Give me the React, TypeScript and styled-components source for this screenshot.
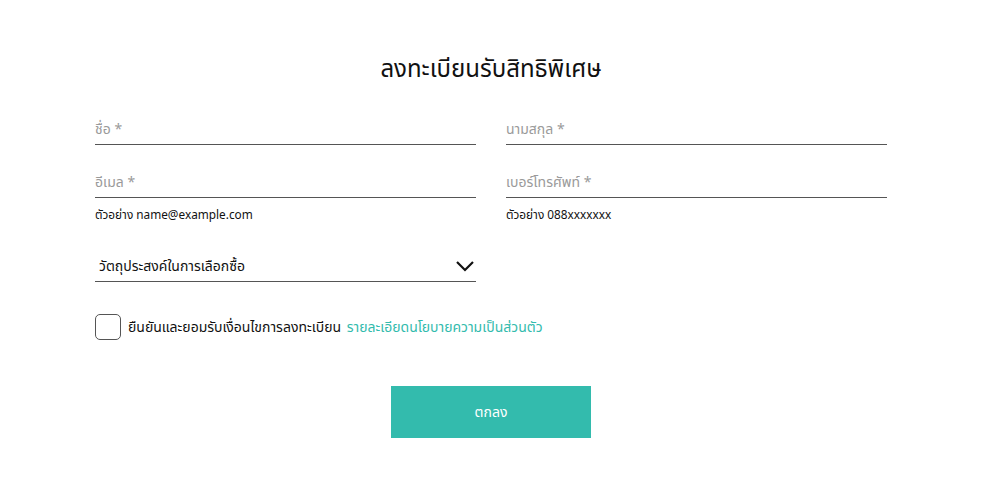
import styled, { createGlobalStyle } from "styled-components";

const GlobalStyle = createGlobalStyle`
    body {
        margin: 0;
        background: #fff;
        font-family: "Noto Sans", "Noto Sans Thai", "DejaVu Sans", sans-serif;
        color: #111;
    }
`;

function App() {
    return (
        <>
            <GlobalStyle />
            <Page>
                <Title>ลงทะเบียนรับสิทธิพิเศษ</Title>
                <FormGrid>
                    <Field>
                        <Input placeholder="ชื่อ *" />
                    </Field>
                    <Field>
                        <Input placeholder="นามสกุล *" />
                    </Field>
                    <Field>
                        <Input placeholder="อีเมล *" />
                        <Hint>ตัวอย่าง name@example.com</Hint>
                    </Field>
                    <Field>
                        <Input placeholder="เบอร์โทรศัพท์ *" />
                        <Hint>ตัวอย่าง 088xxxxxxx</Hint>
                    </Field>
                    <SelectBox>
                        <span>วัตถุประสงค์ในการเลือกซื้อ</span>
                        <svg width="20" height="12" viewBox="0 0 20 12">
                            <path
                                d="M2 2 L10 10 L18 2"
                                fill="none"
                                stroke="#111"
                                strokeWidth="2.2"
                            />
                        </svg>
                    </SelectBox>
                </FormGrid>
                <ConsentRow>
                    <CheckBox type="checkbox" />
                    <ConsentText>
                        ยืนยันและยอมรับเงื่อนไขการลงทะเบียน{" "}
                        <PolicyLink href="#">รายละเอียดนโยบายความเป็นส่วนตัว</PolicyLink>
                    </ConsentText>
                </ConsentRow>
                <SubmitButton>ตกลง</SubmitButton>
            </Page>
        </>
    );
}

export default App;

const Page = styled.div`
    width: 792px;
    margin: 0 auto;
    padding-top: 50px;
    display: flex;
    flex-direction: column;
    align-items: center;
`;

const Title = styled.h1`
    margin: 0;
    font-size: 24px;
    font-weight: 400;
    line-height: 36px;
`;

const FormGrid = styled.div`
    width: 100%;
    margin-top: 27px;
    display: grid;
    grid-template-columns: 1fr 1fr;
    column-gap: 30px;
    row-gap: 21px;
`;

const Field = styled.div`
    display: flex;
    flex-direction: column;
`;

const Input = styled.input`
    height: 31px;
    border: none;
    border-bottom: 1px solid #555;
    padding: 0;
    font-family: inherit;
    font-size: 14px;
    outline: none;
    &::placeholder {
        color: #9a9a9a;
    }
`;

const Hint = styled.div`
    margin-top: 7px;
    font-size: 11.8px;
    line-height: 18px;
`;

const SelectBox = styled.div`
    height: 30px;
    margin-top: 7px;
    padding: 0 1px 0 4px;
    border-bottom: 1px solid #555;
    display: flex;
    align-items: center;
    justify-content: space-between;
    font-size: 14px;
`;

const ConsentRow = styled.div`
    width: 100%;
    margin-top: 32px;
    display: flex;
    align-items: center;
    gap: 7px;
`;

const CheckBox = styled.input`
    appearance: none;
    margin: 0;
    width: 26px;
    height: 26px;
    border: 1px solid #555;
    border-radius: 5px;
    background: #fff;
`;

const ConsentText = styled.span`
    font-size: 14px;
`;

const PolicyLink = styled.a`
    color: #33bbad;
    text-decoration: none;
    margin-left: 2px;
`;

const SubmitButton = styled.button`
    margin-top: 46px;
    width: 200px;
    height: 52px;
    border: none;
    background: #33bbad;
    color: #fff;
    font-family: inherit;
    font-size: 14px;
`;
